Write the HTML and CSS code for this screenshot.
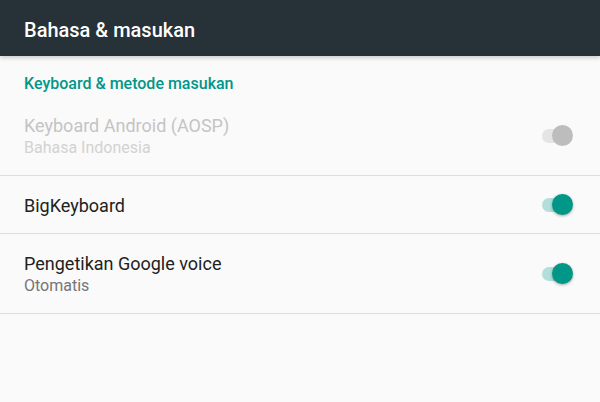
FILE: index.html
```html
<!DOCTYPE html>
<html lang="id">
<head>
    <meta charset="UTF-8">
    <meta name="viewport" content="width=device-width, initial-scale=1.0">
    <title>Bahasa &amp; masukan</title>
    <link rel="stylesheet" href="styles.css">
</head>
<body>
    <!-- Toolbar -->
    <div class="toolbar">
        <h1>Bahasa &amp; masukan</h1>
    </div>

    <div class="content">
        <div class="category">Keyboard &amp; metode masukan</div>

        <div class="pref disabled">
            <div class="pref-text">
                <div class="pref-title">Keyboard Android (AOSP)</div>
                <div class="pref-summary">Bahasa Indonesia</div>
            </div>
            <div class="switch">
                <span class="track"></span>
                <span class="thumb"></span>
            </div>
        </div>

        <div class="pref single">
            <div class="pref-text">
                <div class="pref-title">BigKeyboard</div>
            </div>
            <div class="switch on">
                <span class="track"></span>
                <span class="thumb"></span>
            </div>
        </div>

        <div class="pref">
            <div class="pref-text">
                <div class="pref-title">Pengetikan Google voice</div>
                <div class="pref-summary">Otomatis</div>
            </div>
            <div class="switch on">
                <span class="track"></span>
                <span class="thumb"></span>
            </div>
        </div>
    </div>
</body>
</html>
```

FILE: styles.css
```css
/* Android settings screen */
body {
    margin: 0;
    padding: 0;
    font-family: Roboto, "Noto Sans", sans-serif;
    background-color: #fafafa;
    height: 402px;
    overflow: hidden;
}
.toolbar {
    position: relative;
    height: 56px;
    background-color: #263238;
    display: flex;
    align-items: center;
    padding: 0 24px;
    box-shadow: 0 2px 4px rgba(0, 0, 0, 0.18);
}
.toolbar h1 {
    margin: 0;
    color: #fff;
    font-size: 20px;
    font-weight: 500;
    line-height: 24px;
    margin-top: 3px;
}
.category {
    padding: 16px 24px 0;
    height: 24px;
    line-height: 24px;
    font-size: 16px;
    font-weight: 500;
    color: #009688;
}
.pref {
    display: flex;
    align-items: center;
    padding: 0 27px 0 24px;
    border-bottom: 1px solid #dedede;
}
.pref-text {
    flex: 1;
    padding: 18px 0 17px;
}
.pref.single .pref-text {
    padding: 18px 0 15px;
}
.pref-title {
    font-size: 18px;
    line-height: 24px;
    color: #212121;
}
.pref-summary {
    font-size: 16px;
    line-height: 20px;
    color: #757575;
}
.pref.disabled .pref-title {
    color: #c4c4c4;
}
.pref.disabled .pref-summary {
    color: #d2d2d2;
}
.switch {
    position: relative;
    width: 31px;
    height: 21px;
}
.switch .track {
    position: absolute;
    left: 0;
    top: 4px;
    width: 30px;
    height: 14px;
    border-radius: 7px;
    background-color: #e4e4e4;
}
.switch .thumb {
    position: absolute;
    right: 0;
    top: 0;
    width: 21px;
    height: 21px;
    border-radius: 50%;
    background-color: #bdbdbd;
}
.switch.on .track {
    background-color: #b2dfdb;
}
.switch.on .thumb {
    background-color: #009688;
    box-shadow: 0 1px 3px rgba(0, 0, 0, 0.35);
}
```
